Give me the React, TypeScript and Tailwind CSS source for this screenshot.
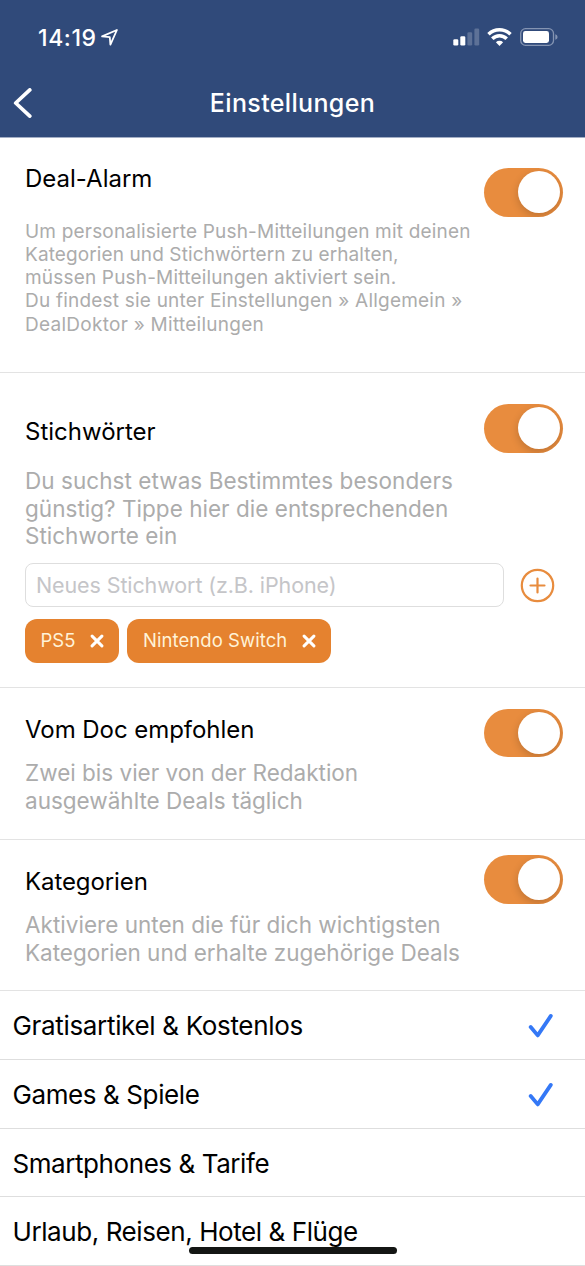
import React, { useState } from 'react';

const Toggle = ({ className }: { className: string }) => {
  const [on, setOn] = useState(true);

  return (
    <button
      role="switch"
      aria-checked={on}
      onClick={() => setOn(!on)}
      className={`flex h-[48.5px] w-[79.5px] shrink-0 items-center overflow-hidden rounded-full px-[3px] ${on ? 'justify-end bg-[#e88c3e]' : 'justify-start bg-gray-200'} ${className}`}
    >
      <span className="size-[42px] rounded-full bg-white shadow-[0_3px_8px_rgba(0,0,0,0.18)]" />
    </button>
  );
};

const Lines = ({ lines }: { lines: { text: string; tracking: string }[] }) => (
  <>
    {lines.map((line) => (
      <span key={line.text} className={`block whitespace-nowrap ${line.tracking}`}>{line.text}</span>
    ))}
  </>
);

const StatusBar = () => (
  <div className="flex h-[74px] items-center justify-between pl-[38px] pr-[27px]">
    <div className="flex items-center gap-[4px]">
      <span className="pt-[1px] text-[23px] font-[550] leading-[28px] tracking-[0.6px]">14:19</span>
      <svg width="17" height="17" viewBox="0 0 17 17" fill="none" stroke="currentColor" strokeWidth="1.8" strokeLinejoin="round">
        <path d="M15.9 1 1.1 7.4l7.7.8.6 7.5z" />
      </svg>
    </div>
    <div className="flex items-center">
      <svg width="27" height="18" viewBox="0 0 27 18" fill="currentColor">
        <rect x="0.3" y="11.3" width="5" height="6.2" rx="1.3" />
        <rect x="7.3" y="8.3" width="5" height="9.2" rx="1.3" />
        <rect x="14.4" y="4.3" width="4.8" height="13.2" rx="1.3" opacity="0.22" />
        <rect x="21.4" y="0.4" width="4.8" height="17.1" rx="1.3" opacity="0.22" />
      </svg>
      <svg className="ml-[7px]" width="25" height="18" viewBox="0 0 25 18" fill="none" stroke="currentColor" strokeWidth="3.5">
        <path d="M1.5 6.3a15.6 15.6 0 0 1 22 0" />
        <path d="M5.3 10.8a10 10 0 0 1 14.4 0" />
        <path d="M12.5 18 8.9 14.2a5.2 5.2 0 0 1 7.2 0z" fill="currentColor" stroke="none" />
      </svg>
      <svg className="ml-[8px]" width="38" height="18" viewBox="0 0 38 18">
        <rect x="0.7" y="0.7" width="32.8" height="16.6" rx="4.8" fill="none" stroke="#8494b2" strokeWidth="1.3" />
        <rect x="3" y="3" width="26" height="12" rx="2.4" fill="white" />
        <path d="M35.3 6.2c1.4.5 2.2 1.5 2.2 2.8s-.8 2.3-2.2 2.8z" fill="#8494b2" />
      </svg>
    </div>
  </div>
);

const CloseIcon = () => (
  <svg width="14" height="14" viewBox="0 0 14 14" fill="none" stroke="white" strokeWidth="3" strokeLinecap="round">
    <path d="M2.1 2.1l9.8 9.8M11.9 2.1l-9.8 9.8" />
  </svg>
);

const categories = [
  { name: 'Gratisartikel & Kostenlos', checked: true, style: 'h-[69px] tracking-[-0.33px]' },
  { name: 'Games & Spiele', checked: true, style: 'h-[69px] tracking-[-0.4px]' },
  { name: 'Smartphones & Tarife', checked: false, style: 'h-[68px] tracking-[-0.43px]' },
  { name: 'Urlaub, Reisen, Hotel & Flüge', checked: false, style: 'h-[69px] tracking-[-0.42px]' },
];

const App = () => {
  const [keyword, setKeyword] = useState('');

  return (
    <div className="relative h-[1266px] w-[585px] overflow-hidden bg-white font-['Inter',sans-serif] text-black">
      <header className="h-[137px] bg-[#304a7a] text-white">
        <StatusBar />
        <div className="grid h-[58px] grid-cols-[60px_1fr_60px] items-center">
          <button className="pl-[13px]">
            <svg width="20" height="30" viewBox="0 0 20 30" fill="none" stroke="currentColor" strokeWidth="3.7" strokeLinecap="round" strokeLinejoin="round">
              <path d="M16.8 1.9 2.7 15l14.1 13.1" />
            </svg>
          </button>
          <h1 className="text-center text-[25px] font-[550] leading-[30px] tracking-[0.35px]">Einstellungen</h1>
        </div>
      </header>

      <section className="flex h-[236px] justify-between border-b border-t border-b-[#e3e3e3] border-t-[#a3aec5] pl-[25px] pr-[22px]">
        <div className="w-0 pt-[27px]">
          <h2 className="whitespace-nowrap text-[24px] leading-[28px]">Deal-Alarm</h2>
          <p className="mt-[26.6px] text-[19px] leading-[23.3px] text-[#acacac]">
            <Lines
              lines={[
                { text: 'Um personalisierte Push-Mitteilungen mit deinen', tracking: 'tracking-[0.19px]' },
                { text: 'Kategorien und Stichwörtern zu erhalten,', tracking: 'tracking-[0.11px]' },
                { text: 'müssen Push-Mitteilungen aktiviert sein.', tracking: 'tracking-[0.18px]' },
                { text: 'Du findest sie unter Einstellungen » Allgemein »', tracking: 'tracking-[0.21px]' },
                { text: 'DealDoktor » Mitteilungen', tracking: 'tracking-[0.27px]' },
              ]}
            />
          </p>
        </div>
        <Toggle className="mt-[30px]" />
      </section>

      <section className="h-[315px] border-b border-[#e3e3e3] pl-[25px] pr-[22px]">
        <div className="flex h-[190px] justify-between">
          <div className="w-0 pt-[44.5px]">
            <h2 className="whitespace-nowrap text-[24px] leading-[28px]">Stichwörter</h2>
            <p className="mt-[21.5px] text-[22.5px] leading-[27.7px] text-[#acacac]">
              <Lines
                lines={[
                  { text: 'Du suchst etwas Bestimmtes besonders', tracking: 'tracking-[0.05px]' },
                  { text: 'günstig? Tippe hier die entsprechenden', tracking: 'tracking-[0.03px]' },
                  { text: 'Stichworte ein', tracking: 'tracking-[0px]' },
                ]}
              />
            </p>
          </div>
          <Toggle className="mt-[31px]" />
        </div>
        <div className="flex items-center justify-between pr-[8px]">
          <input
            value={keyword}
            onChange={(e) => setKeyword(e.target.value)}
            placeholder="Neues Stichwort (z.B. iPhone)"
            className="h-[44px] w-[479px] rounded-[8px] border border-[#dedede] pl-[10px] text-[21.5px] tracking-[-0.11px] placeholder-[#c5c5c8] outline-none"
          />
          <button>
            <svg width="35" height="35" viewBox="0 0 35 35" fill="none" stroke="#e88c3e" strokeWidth="2.2" strokeLinecap="round">
              <circle cx="17.5" cy="17.5" r="15.7" />
              <path d="M17.5 10.5v14M10.5 17.5h14" />
            </svg>
          </button>
        </div>
        <div className="mt-[12px] flex gap-[8px] text-[18.5px] text-[#fff3d8]">
          <div className="flex h-[43.5px] w-[94.4px] items-center justify-between rounded-[12px] bg-[#e5822f] pl-[15.5px] pr-[15px]">
            <span>PS5</span>
            <CloseIcon />
          </div>
          <div className="flex h-[43.5px] w-[204px] items-center justify-between rounded-[12px] bg-[#e5822f] pl-[15.5px] pr-[15px]">
            <span className="whitespace-nowrap tracking-[0.07px]">Nintendo Switch</span>
            <CloseIcon />
          </div>
        </div>
      </section>

      <section className="flex h-[152px] justify-between border-b border-[#e3e3e3] pl-[25px] pr-[22px]">
        <div className="w-0 pt-[28px]">
          <h2 className="whitespace-nowrap text-[24px] leading-[28px] tracking-[-0.05px]">Vom Doc empfohlen</h2>
          <p className="mt-[15px] text-[22.5px] leading-[27.7px] text-[#acacac]">
            <Lines
              lines={[
                { text: 'Zwei bis vier von der Redaktion', tracking: 'tracking-[0px]' },
                { text: 'ausgewählte Deals täglich', tracking: 'tracking-[0px]' },
              ]}
            />
          </p>
        </div>
        <Toggle className="mt-[20.5px]" />
      </section>

      <section className="flex h-[151px] justify-between border-b border-[#e3e3e3] pl-[25px] pr-[22px]">
        <div className="w-0 pt-[28px]">
          <h2 className="whitespace-nowrap text-[24px] leading-[28px] tracking-[-0.1px]">Kategorien</h2>
          <p className="mt-[15px] text-[22.5px] leading-[27.7px] text-[#acacac]">
            <Lines
              lines={[
                { text: 'Aktiviere unten die für dich wichtigsten', tracking: 'tracking-[0.02px]' },
                { text: 'Kategorien und erhalte zugehörige Deals', tracking: 'tracking-[-0.02px]' },
              ]}
            />
          </p>
        </div>
        <Toggle className="mt-[15px]" />
      </section>

      <ul>
        {categories.map((category) => (
          <li key={category.name} className={`flex items-center justify-between border-b border-[#dedede] pl-[12.5px] pr-[32px] pt-[1px] text-[26px] ${category.style}`}>
            <span className="whitespace-nowrap">{category.name}</span>
            {category.checked && (
              <svg width="25" height="25" viewBox="0 0 25 25" fill="none" stroke="#3478f6" strokeWidth="3.8" strokeLinecap="round" strokeLinejoin="round">
                <path d="M2.7 14 9.7 22.4 22.8 2.9" />
              </svg>
            )}
          </li>
        ))}
      </ul>

      {/* home indicator */}
      <div className="absolute left-[188.5px] top-[1246.5px] h-[7.5px] w-[208.5px] rounded-full bg-[#141614]" />
    </div>
  );
};

export default App;
